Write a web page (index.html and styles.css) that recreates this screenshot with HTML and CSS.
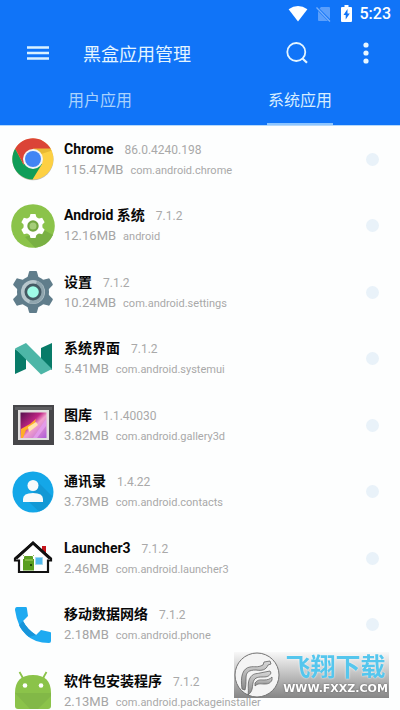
FILE: index.html
```html
<!DOCTYPE html>
<html lang="zh-CN">
<head>
<meta charset="utf-8">
<meta name="viewport" content="width=device-width, initial-scale=1">
<title>黑盒应用管理</title>
<link rel="stylesheet" href="styles.css">
</head>
<body>
<header class="header">
  <div class="status">
    <svg width="20" height="16" viewBox="0 0 20 16" aria-hidden="true"><path d="M0.6 3.2Q10-3.2 19.4 3.2L10 15.4Z" fill="#fff"/></svg>
    <svg width="15" height="16" viewBox="0 0 15 16" aria-hidden="true"><path d="M5 1h8q1 0 1 1v11L3.5 2.5zM2 5l10 10H3q-1 0-1-1z" fill="#5b9ffb"/><path d="M.5 1.5L14 15.500" stroke="#78b0fc" stroke-width="1.300"/></svg>
    <svg width="11" height="17" viewBox="0 0 11 17" aria-hidden="true"><path d="M3.500 0h4v2H10q1 0 1 1v13q0 1-1 1H1q-1 0-1-1V3q0-1 1-1h2.500z" fill="#fff"/><path d="M6.500 4L2.500 10h2.200v4.500L8.800 8.500H6.500z" fill="#1074f8"/></svg>
    <span class="clock">5:23</span>
  </div>
  <div class="toolbar">
    <button class="icon-button" aria-label="菜单"><svg width="22" height="14" viewBox="0 0 22 14"><path d="M0 1.500h22M0 7h22M0 12.500h22" stroke="#d9f1ff" stroke-width="2.400"/></svg></button>
    <h1 class="title">黑盒应用管理</h1>
    <button class="icon-button search" aria-label="搜索"><svg width="22" height="22" viewBox="0 0 22 22" fill="none" stroke="#e4f5ff" stroke-width="1.800"><circle cx="10.300" cy="10" r="9"/><path d="M16.500 16.500l4.500 4.300" stroke-width="2.200"/></svg></button>
    <button class="icon-button" aria-label="更多"><svg width="6" height="22" viewBox="0 0 6 22" fill="#e9f7ff"><circle cx="3" cy="3" r="2.600"/><circle cx="3" cy="11" r="2.600"/><circle cx="3" cy="19" r="2.600"/></svg></button>
  </div>
  <nav class="tabs">
    <a class="tab" href="#user">用户应用</a>
    <a class="tab active" href="#system" aria-current="page">系统应用</a>
  </nav>
</header>
<main id="system">
  <ul class="apps">
    <li><label class="app">
      <svg class="icon" viewBox="0 0 44 44"><circle cx="22" cy="22.700" r="20.500" fill="#bbb"/><circle cx="22" cy="22" r="20.500" fill="#fdd043"/><path d="M22 22L12.500 27.500L4.200 11.500A20.500 20.500 0 0 0 21.500 42.500L31 27z" fill="#109d58"/><path d="M4.200 11.500A20.500 20.500 0 0 1 39.700 11.700H22L12.500 27.500z" fill="#db4437"/><path d="M22 11.700h17.700l.8 2L30 17z" fill="#e9b932"/><circle cx="22" cy="22" r="10" fill="#f4f4f4"/><circle cx="22" cy="22" r="8" fill="#4285f4"/></svg>
      <span class="info"><span class="line"><b>Chrome</b><span class="version">86.0.4240.198</span></span><span class="line"><span class="size">115.47MB</span><span class="package">com.android.chrome</span></span></span>
      <input type="checkbox" class="check">
    </label></li>
    <li><label class="app">
      <svg class="icon" viewBox="0 0 44 44"><circle cx="22" cy="22" r="21.800" fill="#8bc34a"/><path d="M33 26L14 33l10 10.700A22 22 0 0 0 42 31z" fill="#79b043"/><g fill="#fff"><circle cx="22" cy="22" r="9.500"/><g id="teeth"><path d="M19.500 10h5l1.500 5h-8zM19.500 34h5l1.500-5h-8z"/></g><use href="#teeth" transform="rotate(60 22 22)"/><use href="#teeth" transform="rotate(120 22 22)"/></g><circle cx="22" cy="22" r="4.600" fill="#a5cd79" stroke="#72a63f" stroke-width="2.200"/></svg>
      <span class="info"><span class="line"><b>Android 系统</b><span class="version">7.1.2</span></span><span class="line"><span class="size">12.16MB</span><span class="package">android</span></span></span>
      <input type="checkbox" class="check">
    </label></li>
    <li><label class="app">
      <svg class="icon" viewBox="0 0 44 44"><g fill="#607d8b"><circle cx="22" cy="22" r="16"/><g id="cogs"><path d="M18 2q0-1 1-1h6q1 0 1 1l2 7H16zM18 42q0 1 1 1h6q1 0 1-1l2-7H16z"/></g><use href="#cogs" transform="rotate(60 22 22)"/><use href="#cogs" transform="rotate(120 22 22)"/></g><circle cx="22" cy="22" r="12" fill="#b8c7cd"/><path d="M26 10.700A12 12 0 0 1 18 33.300z" fill="#8fa5ae"/><circle cx="22" cy="22" r="8.500" fill="#455a64"/><circle cx="22" cy="22" r="5.800" fill="#a0fce8"/></svg>
      <span class="info"><span class="line"><b>设置</b><span class="version">7.1.2</span></span><span class="line"><span class="size">10.24MB</span><span class="package">com.android.settings</span></span></span>
      <input type="checkbox" class="check">
    </label></li>
    <li><label class="app">
      <svg class="icon" viewBox="0 0 44 44"><path d="M4 12l11 8v12L4 37zM30 11l11-5v27L30 24z" fill="#087b68"/><path d="M4 11.500L15 6l26 26-11 5.500z" fill="#4db6a7"/></svg>
      <span class="info"><span class="line"><b>系统界面</b><span class="version">7.1.2</span></span><span class="line"><span class="size">5.41MB</span><span class="package">com.android.systemui</span></span></span>
      <input type="checkbox" class="check">
    </label></li>
    <li><label class="app">
      <svg class="icon" viewBox="0 0 44 44"><defs><linearGradient id="photo" x2="1" y2="1"><stop stop-color="#55104d"/><stop offset=".4" stop-color="#bd2483"/><stop offset=".55" stop-color="#f1a0cc"/><stop offset="1" stop-color="#ad5bd8"/></linearGradient></defs><path d="M2 2h41v40H2z" fill="#47474a"/><path d="M4 4h37v3H4z" fill="#5d5d60"/><path d="M7 7h31v30H7z" fill="#e1dfde"/><path d="M9.500 9.500h26V35h-26z" fill="url(#photo)"/><path d="M10 35V26l9-5 6-5-2 7-8 4-3 8z" fill="#ffae27"/><path d="M17 24l8-5 2 3-9 7z" fill="#ffe6ae"/><path d="M22 35L35 16v7l-9 12z" fill="#e29ae9"/></svg>
      <span class="info"><span class="line"><b>图库</b><span class="version">1.1.40030</span></span><span class="line"><span class="size">3.82MB</span><span class="package">com.android.gallery3d</span></span></span>
      <input type="checkbox" class="check">
    </label></li>
    <li><label class="app">
      <svg class="icon" viewBox="0 0 44 44"><circle cx="22" cy="22" r="20.500" fill="#14a7e8"/><path d="M27 12l14 14A21 21 0 0 1 28 41.500L18 32z" fill="#1298d5"/><circle cx="22" cy="15.500" r="5.500" fill="#f7fafb"/><path d="M12 32v-3q0-6 10-6t10 6v3z" fill="#f7fafb"/></svg>
      <span class="info"><span class="line"><b>通讯录</b><span class="version">1.4.22</span></span><span class="line"><span class="size">3.73MB</span><span class="package">com.android.contacts</span></span></span>
      <input type="checkbox" class="check">
    </label></li>
    <li><label class="app">
      <svg class="icon" viewBox="0 0 44 44"><path d="M31 10h4v9l-4-4z" fill="#c4141b"/><path d="M4 24.500v-2L22 7l18 15.500v2h-3V36H8V24.500z" fill="#fff" stroke="#111" stroke-width="2.200"/><path d="M5 22.500L22 7l17 15.500" fill="none" stroke="#111" stroke-width="3"/><path d="M13 20h9v3h1v11.500H12V23h1z" fill="#5a9e20"/><path d="M14 21l-2-2M21 21l2-2" stroke="#8cbb55"/><path d="M14 24h8" stroke="#a6d364"/><path d="M19 28h2v2h-2z" fill="#214b09"/><path d="M24.500 21.500h7v7h-7z" fill="#51b9ed" stroke="#a2d9f1"/></svg>
      <span class="info"><span class="line"><b>Launcher3</b><span class="version">7.1.2</span></span><span class="line"><span class="size">2.46MB</span><span class="package">com.android.launcher3</span></span></span>
      <input type="checkbox" class="check">
    </label></li>
    <li><label class="app">
      <svg class="icon" viewBox="0 0 44 44"><path d="M6 4h9q1 0 1 2l1 7-5 5q4 8 13 14l5-5 9 2q1 0 1 1v8q0 2-2 2Q9 40 4 7q0-3 2-3z" fill="#1eaaf1"/><path d="M12 18q4 8 13 14l-7 2Q9 26 8 22z" fill="#1895da"/></svg>
      <span class="info"><span class="line"><b>移动数据网络</b><span class="version">7.1.2</span></span><span class="line"><span class="size">2.18MB</span><span class="package">com.android.phone</span></span></span>
      <input type="checkbox" class="check">
    </label></li>
    <li><label class="app">
      <svg class="icon" viewBox="0 0 44 44"><path d="M8.500 3l4 7M35.500 3l-4 7" stroke="#8bc34a" stroke-width="1.800"/><path d="M4 24q0-18 18-18t18 18v13q0 3-3 3H7q-3 0-3-3z" fill="#8bc34a"/><path d="M4 24h36v3L27 40H19z" fill="#82b847"/><circle cx="14" cy="16.500" r="2.300" fill="#fff"/><circle cx="30" cy="16.500" r="2.300" fill="#fff"/></svg>
      <span class="info"><span class="line"><b>软件包安装程序</b><span class="version">7.1.2</span></span><span class="line"><span class="size">2.13MB</span><span class="package">com.android.packageinstaller</span></span></span>
      <input type="checkbox" class="check">
    </label></li>
  </ul>
</main>
<aside class="watermark">
  <svg width="46" height="46" viewBox="0 0 46 46" aria-hidden="true"><defs><linearGradient id="mark" x2="0" y2="1"><stop stop-color="#d8d8d8"/><stop offset="1" stop-color="#888"/></linearGradient></defs><circle cx="23" cy="23" r="22" fill="#f4f4f4" stroke="#737373"/><g fill="url(#mark)" stroke="#646464" stroke-width=".8"><path d="M8 37C6 24 9 16 16 15c5-1 7 1 13-2l1-3 6-1 1 3-3 1c-2 5-6 6-12 5-7 0-10 2-10 8 0 5 0 8-1 12z"/><path d="M14 43c1-6-1-12 2-17 3-5 6-4 10-5l10-2 1 2c-2 4-5 4-9 4-5 0-8 1-9 6-1 5 0 8-5 12z"/><path d="M21 31c3-4 6-3 9-3 4 0 6-1 8-3v3c-2 4-5 4-8 4s-6-1-9 2z"/></g></svg>
  <div class="brand"><span class="brand-name">飞翔下载</span><span class="brand-url">WWW.FXXZ.COM</span></div>
</aside>
</body>
</html>
```
FILE: styles.css
```css
* {
  box-sizing: border-box;
}

body {
  margin: 0;
  min-height: 100vh;
  background: #fdfefe;
  font-family: Roboto, "Noto Sans CJK SC", sans-serif;
  overflow: hidden;
}

.header {
  background: #1074f8;
  border-bottom: 1px solid #b5d9fb;
}

.status {
  display: flex;
  align-items: center;
  justify-content: flex-end;
  gap: 8px;
  height: 27px;
  padding-right: 9px;
  color: #fff;
}

.status svg:nth-child(2) {
  margin-right: 2px;
}

.clock {
  font-size: 16px;
  font-weight: 500;
}

.toolbar {
  display: flex;
  align-items: center;
  height: 52px;
  padding: 0 14px 0 18px;
}

.icon-button {
  display: flex;
  align-items: center;
  justify-content: center;
  width: 40px;
  height: 40px;
  padding: 0;
  border: 0;
  background: none;
}

.search {
  margin-right: 29px;
}

.title {
  flex: 1;
  margin: 0 0 0 25px;
  color: #e4f5ff;
  font-size: 18px;
  font-weight: 400;
}

.tabs {
  display: grid;
  grid-template-columns: 1fr 1fr;
  justify-items: center;
  height: 46px;
}

.tab {
  padding: 0 1px;
  border-bottom: 2px solid transparent;
  color: #a9d2fd;
  font-size: 16px;
  line-height: 44px;
  text-decoration: none;
}

.active {
  border-color: #8dc5ff;
  color: #d7edff;
}

.apps {
  margin: 0;
  padding: 0;
  list-style: none;
}

.app {
  display: flex;
  align-items: center;
  gap: 9px;
  height: 66px;
  padding: 0 21px 0 11px;
}

li:nth-child(even) .app {
  height: 67px;
}

.icon {
  flex: none;
  width: 44px;
  height: 44px;
}

.info {
  flex: 1;
  min-width: 0;
  padding-top: 1px;
}

.line {
  display: flex;
  align-items: baseline;
  line-height: 19px;
  white-space: nowrap;
}

b {
  margin-right: 11px;
  color: #080808;
  font-size: 14px;
  font-weight: 700;
}

.version,
.package {
  color: #a9a9a9;
  font-size: 12px;
}

.package {
  font-size: 11px;
}

.size {
  margin-right: 7px;
  color: #a5a5a5;
  font-size: 13px;
}

.check {
  appearance: none;
  flex: none;
  width: 13px;
  height: 13px;
  margin: 0;
  border-radius: 50%;
  background: #e9f2f9;
}

.watermark {
  position: fixed;
  right: 11px;
  bottom: 12px;
  display: flex;
  align-items: center;
  gap: 2px;
  width: 155px;
  height: 46px;
  background: linear-gradient(#f8f8f8, #858585);
}

.brand {
  display: flex;
  flex: 1;
  flex-direction: column;
  align-items: center;
}

.brand-name {
  color: #55c6ed;
  font-size: 25px;
  font-weight: 700;
  line-height: 28px;
  text-shadow: 0 0 2px #fff;
}

.brand-url {
  color: #fff;
  font-family: "DejaVu Sans", sans-serif;
  font-size: 11px;
  font-weight: 700;
  line-height: 14px;
  text-shadow: 0 0 2px #555;
}
```
